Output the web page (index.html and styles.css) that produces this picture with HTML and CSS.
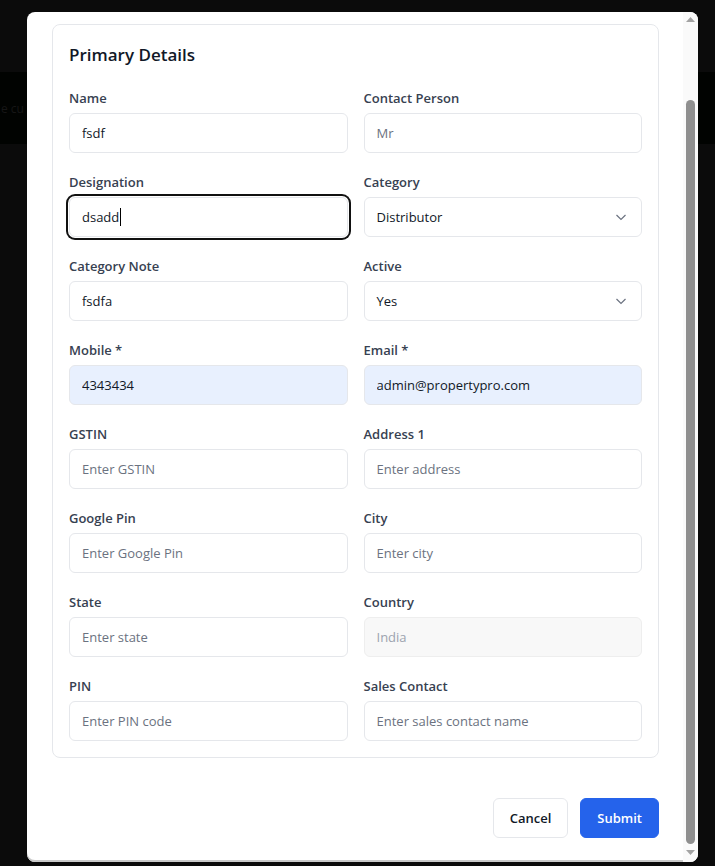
FILE: index.html
```html
<!DOCTYPE html>
<html lang="en">
<head>
<meta charset="utf-8">
<title>Primary Details</title>
<link rel="stylesheet" href="styles.css">
</head>
<body>
<div class="backdrop">
  <div class="band"><span class="ghost">e cu</span></div>
</div>
<div class="modal">
  <div class="modal-body">
    <section class="card">
      <h2 class="card-title">Primary Details</h2>
      <div class="grid">
        <div class="group">
          <label class="label">Name</label>
          <input class="field" type="text" value="fsdf">
        </div>
        <div class="group">
          <label class="label">Contact Person</label>
          <input class="field" type="text" placeholder="Mr">
        </div>
        <div class="group">
          <label class="label">Designation</label>
          <div class="field focused">dsadd<span class="caret"></span></div>
        </div>
        <div class="group">
          <label class="label">Category</label>
          <div class="field select"><span>Distributor</span>
            <svg class="chev" width="12" height="12" viewBox="0 0 12 12"><polyline points="1.5,4 6,8.5 10.5,4" fill="none" stroke="#6b7280" stroke-width="1.2"/></svg>
          </div>
        </div>
        <div class="group">
          <label class="label">Category Note</label>
          <input class="field" type="text" value="fsdfa">
        </div>
        <div class="group">
          <label class="label">Active</label>
          <div class="field select"><span>Yes</span>
            <svg class="chev" width="12" height="12" viewBox="0 0 12 12"><polyline points="1.5,4 6,8.5 10.5,4" fill="none" stroke="#6b7280" stroke-width="1.2"/></svg>
          </div>
        </div>
        <div class="group">
          <label class="label">Mobile *</label>
          <input class="field autofill" type="text" value="4343434">
        </div>
        <div class="group">
          <label class="label">Email *</label>
          <input class="field autofill" type="text" value="admin@propertypro.com">
        </div>
        <div class="group">
          <label class="label">GSTIN</label>
          <input class="field" type="text" placeholder="Enter GSTIN">
        </div>
        <div class="group">
          <label class="label">Address 1</label>
          <input class="field" type="text" placeholder="Enter address">
        </div>
        <div class="group">
          <label class="label">Google Pin</label>
          <input class="field" type="text" placeholder="Enter Google Pin">
        </div>
        <div class="group">
          <label class="label">City</label>
          <input class="field" type="text" placeholder="Enter city">
        </div>
        <div class="group">
          <label class="label">State</label>
          <input class="field" type="text" placeholder="Enter state">
        </div>
        <div class="group">
          <label class="label">Country</label>
          <input class="field disabled" type="text" placeholder="India" disabled>
        </div>
        <div class="group">
          <label class="label">PIN</label>
          <input class="field" type="text" placeholder="Enter PIN code">
        </div>
        <div class="group">
          <label class="label">Sales Contact</label>
          <input class="field" type="text" placeholder="Enter sales contact name">
        </div>
      </div>
    </section>
    <div class="footer">
      <button class="btn btn-cancel" type="button">Cancel</button>
      <button class="btn btn-submit" type="button">Submit</button>
    </div>
  </div>
  <div class="scrollbar">
    <svg class="arrow" width="15" height="14" viewBox="0 0 15 14"><polygon points="3,10 12,10 7.5,5" fill="#a3a3a3"/></svg>
    <div class="track"><div class="thumb"></div></div>
    <svg class="arrow" width="15" height="14" viewBox="0 0 15 14"><polygon points="3,4 12,4 7.5,9" fill="#a3a3a3"/></svg>
  </div>
</div>
</body>
</html>
```
FILE: styles.css
```css
* { box-sizing: border-box; }
html, body {
  margin: 0;
  padding: 0;
  background: #0b0b0b;
  width: 715px;
  height: 866px;
  overflow: hidden;
  font-family: "Open Sans", "Noto Sans", sans-serif;
}
.backdrop {
  padding-top: 72px;
}
.band {
  height: 72px;
  background: #010301;
  display: flex;
  align-items: center;
  font-size: 12px;
}
.ghost {
  color: #161616;
  margin-left: 1px;
}
.modal {
  position: absolute;
  left: 27px;
  top: 12px;
  width: 671px;
  height: 850px;
  background: #fff;
  border-radius: 8px;
  overflow: hidden;
  display: flex;
  box-shadow: inset 0 -2px 0 #c9c9c9;
}
.modal-body {
  flex: 1;
  padding: 12px 24px 0 25px;
  display: flex;
  flex-direction: column;
}
.card {
  border: 1px solid #e5e7eb;
  border-radius: 8px;
  padding: 16px;
}
.card-title {
  margin: 0 0 19px;
  font-size: 17px;
  line-height: 28px;
  font-weight: 600;
  color: #111827;
}
.grid {
  display: grid;
  grid-template-columns: 1fr 1fr;
  column-gap: 16px;
  row-gap: 19px;
}
.group {
  display: flex;
  flex-direction: column;
}
.label {
  font-size: 13px;
  line-height: 20px;
  font-weight: 600;
  color: #374151;
  margin-bottom: 5px;
}
.field {
  height: 40px;
  width: 100%;
  border: 1px solid #e5e7eb;
  border-radius: 6px;
  padding: 0 12px;
  font-family: inherit;
  font-size: 13px;
  color: #111827;
  background: #fff;
  outline: none;
  display: flex;
  align-items: center;
}
.field::placeholder { color: #6b7280; opacity: 1; }
.field.autofill { background: #e8f0fe; }
.field.disabled { background: #f8f8f8; border-color: #eeeeee; }
.field.disabled::placeholder { color: #9ca3af; }
.field.focused {
  box-shadow: 0 0 0 1px #fff, 0 0 0 3px #111;
}
.caret {
  display: inline-block;
  width: 1px;
  height: 18px;
  background: #000;
  margin-left: 1px;
}
.field.select {
  justify-content: space-between;
  padding-right: 14px;
}
.footer {
  margin-top: 40px;
  display: flex;
  justify-content: flex-end;
  gap: 12px;
}
.btn {
  height: 40px;
  padding: 0 16px;
  border-radius: 6px;
  font-family: inherit;
  font-size: 13px;
  font-weight: 600;
  cursor: pointer;
}
.btn-cancel {
  background: #fff;
  border: 1px solid #e5e7eb;
  color: #111827;
}
.btn-submit {
  background: #2563eb;
  border: 1px solid #2563eb;
  color: #fff;
}
.scrollbar {
  width: 15px;
  background: #fafafa;
  display: flex;
  flex-direction: column;
  padding-bottom: 2px;
}
.arrow { display: block; flex: none; }
.track {
  flex: 1;
  padding: 74px 3px 2px 3px;
  display: flex;
}
.thumb {
  flex: 1;
  background: #8f8f8f;
  border-radius: 5px;
}
```
